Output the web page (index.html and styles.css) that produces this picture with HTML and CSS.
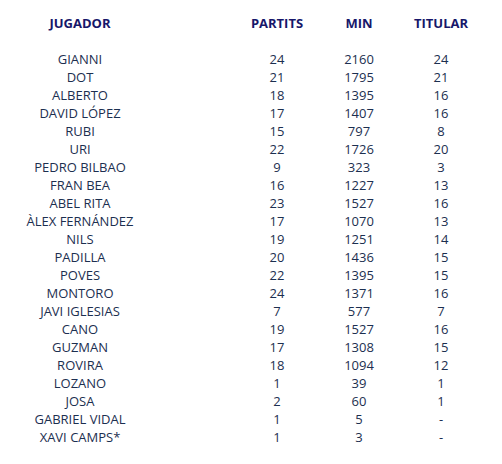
FILE: index.html
```html
<!DOCTYPE html>
<html lang="ca">
<head>
<meta charset="utf-8">
<title>Jugadors</title>
<link rel="stylesheet" href="styles.css">
</head>
<body>
<table class="stats">
  <colgroup>
    <col class="c-name"><col class="c-gap"><col class="c-num"><col class="c-num"><col class="c-num">
  </colgroup>
  <thead>
    <tr><th>JUGADOR</th><th></th><th>PARTITS</th><th>MIN</th><th>TITULAR</th></tr>
    <tr class="spacer"><td colspan="5"></td></tr>
  </thead>
  <tbody>
    <tr><td>GIANNI</td><td></td><td>24</td><td>2160</td><td>24</td></tr>
    <tr><td>DOT</td><td></td><td>21</td><td>1795</td><td>21</td></tr>
    <tr><td>ALBERTO</td><td></td><td>18</td><td>1395</td><td>16</td></tr>
    <tr><td>DAVID LÓPEZ</td><td></td><td>17</td><td>1407</td><td>16</td></tr>
    <tr><td>RUBI</td><td></td><td>15</td><td>797</td><td>8</td></tr>
    <tr><td>URI</td><td></td><td>22</td><td>1726</td><td>20</td></tr>
    <tr><td>PEDRO BILBAO</td><td></td><td>9</td><td>323</td><td>3</td></tr>
    <tr><td>FRAN BEA</td><td></td><td>16</td><td>1227</td><td>13</td></tr>
    <tr><td>ABEL RITA</td><td></td><td>23</td><td>1527</td><td>16</td></tr>
    <tr><td>ÀLEX FERNÁNDEZ</td><td></td><td>17</td><td>1070</td><td>13</td></tr>
    <tr><td>NILS</td><td></td><td>19</td><td>1251</td><td>14</td></tr>
    <tr><td>PADILLA</td><td></td><td>20</td><td>1436</td><td>15</td></tr>
    <tr><td>POVES</td><td></td><td>22</td><td>1395</td><td>15</td></tr>
    <tr><td>MONTORO</td><td></td><td>24</td><td>1371</td><td>16</td></tr>
    <tr><td>JAVI IGLESIAS</td><td></td><td>7</td><td>577</td><td>7</td></tr>
    <tr><td>CANO</td><td></td><td>19</td><td>1527</td><td>16</td></tr>
    <tr><td>GUZMAN</td><td></td><td>17</td><td>1308</td><td>15</td></tr>
    <tr><td>ROVIRA</td><td></td><td>18</td><td>1094</td><td>12</td></tr>
    <tr><td>LOZANO</td><td></td><td>1</td><td>39</td><td>1</td></tr>
    <tr><td>JOSA</td><td></td><td>2</td><td>60</td><td>1</td></tr>
    <tr><td>GABRIEL VIDAL</td><td></td><td>1</td><td>5</td><td>-</td></tr>
    <tr><td>XAVI CAMPS*</td><td></td><td>1</td><td>3</td><td>-</td></tr>
  </tbody>
</table>
</body>
</html>
```

FILE: styles.css
```css
html, body {
  background: #ffffff;
}
body {
  margin: 0;
  padding: 14px 8px 0 8px;
  font-family: "Open Sans", "Liberation Sans", sans-serif;
  font-size: 13px;
  color: #1c2f50;
}
.stats {
  border-collapse: collapse;
  table-layout: fixed;
  width: 474px;
}
.c-name { width: 144px; }
.c-gap { width: 84px; }
.c-num { width: 82px; }
.stats th,
.stats td {
  padding: 0;
  height: 18px;
  line-height: 18px;
  text-align: center;
  white-space: nowrap;
  vertical-align: middle;
}
.stats th {
  font-weight: 700;
  color: #17176a;
}
.stats .spacer td {
  height: 18px;
}
```
